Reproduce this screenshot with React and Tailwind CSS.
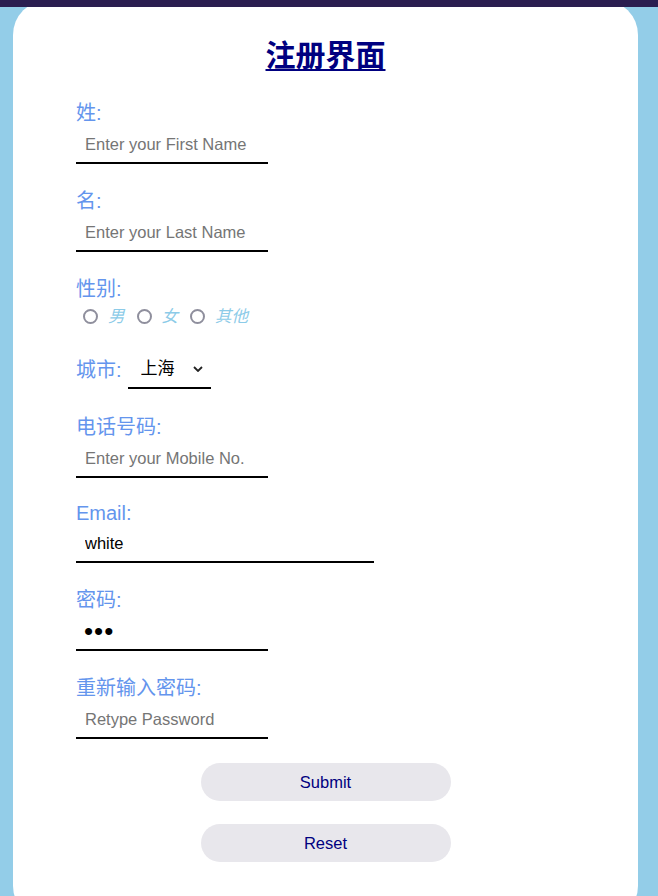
import React, { useState } from 'react';

const font = { fontFamily: '"Liberation Sans", "Noto Sans CJK SC", sans-serif' };

const labelCls = 'block text-[20px] leading-[26px] text-[#6495ed]';
const inputCls =
  'block h-[38px] border-b-2 border-black bg-transparent px-[9px] text-[16.5px] text-black outline-none placeholder:text-[#757575]';

function Field({ label, type = 'text', placeholder, value, onChange, wide, tight }) {
  return (
    <div className="mb-[24px]">
      <label className={tight ? 'block text-[20px] leading-[23px] text-[#6495ed]' : labelCls}>{label}</label>
      <input
        type={type}
        placeholder={placeholder}
        value={value}
        onChange={onChange}
        className={`${inputCls} ${wide ? 'w-[298px]' : 'w-[192px]'}`}
      />
    </div>
  );
}

export default function App() {
  const [form, setForm] = useState({
    first: '',
    last: '',
    gender: '',
    city: '上海',
    mobile: '',
    email: 'white',
    password: 'abc',
    retype: '',
  });

  const set = key => e => setForm({ ...form, [key]: e.target.value });

  return (
    <div className="min-h-screen bg-[#93cde8]" style={font}>
      {/* top strip */}
      <div className="fixed inset-x-0 top-0 z-10 h-[7px] bg-[#2b1e50]" />

      <div className="ml-[13px] mr-[20px] h-[921px] rounded-[35px] bg-white pt-[35px]">
        <h1
          className="text-center text-[30px] font-bold leading-[36px] text-[#000080] underline decoration-2 underline-offset-[3px]"
          style={{ fontFamily: '"Noto Sans CJK SC", sans-serif' }}
        >
          注册界面
        </h1>

        <form className="mt-[29px] px-[63px]" onSubmit={e => e.preventDefault()}>
          <Field label="姓:" placeholder="Enter your First Name" value={form.first} onChange={set('first')} />
          <Field label="名:" placeholder="Enter your Last Name" value={form.last} onChange={set('last')} />

          {/* gender */}
          <div className="mb-[21px]">
            <label className={labelCls}>性别:</label>
            <div className="flex h-[28px] items-center gap-[12px] pl-[7px]">
              {['男', '女', '其他'].map(g => (
                <label key={g} className="flex items-center gap-[10px]">
                  <input
                    type="radio"
                    name="gender"
                    value={g}
                    checked={form.gender === g}
                    onChange={set('gender')}
                    className="m-0 h-[15px] w-[15px] shrink-0 appearance-none rounded-full border-2 border-[#8f8f9d] bg-white checked:border-[4px] checked:border-[#0060df]"
                  />
                  <span className="text-[16.5px] italic leading-[20px] text-[#8ccbe8]">{g}</span>
                </label>
              ))}
            </div>
          </div>

          {/* city */}
          <div className="mb-[25px] flex h-[38px] items-center">
            <label className="text-[20px] leading-[26px] text-[#6495ed]">城市:</label>
            <div className="relative ml-[6px]">
              <select
                value={form.city}
                onChange={set('city')}
                className="block h-[38px] w-[83px] appearance-none border-b-2 border-black bg-transparent pl-[13px] text-[17px] text-black outline-none"
              >
                <option>上海</option>
                <option>北京</option>
                <option>广州</option>
                <option>深圳</option>
              </select>
              <svg
                className="pointer-events-none absolute right-[8px] top-[15px]"
                width="10"
                height="6"
                viewBox="0 0 10 6"
                fill="none"
                stroke="#222"
                strokeWidth="1.8"
              >
                <path d="M1 1l4 4 4-4" />
              </svg>
            </div>
          </div>

          <Field label="电话号码:" placeholder="Enter your Mobile No." value={form.mobile} onChange={set('mobile')} />
          <Field label="Email:" type="email" value={form.email} onChange={set('email')} wide tight />

          <div className="mb-[24px]">
            <label className={labelCls}>密码:</label>
            <input
              type="password"
              value={form.password}
              onChange={set('password')}
              className="block h-[38px] w-[192px] border-b-2 border-black bg-transparent px-[8px] text-[26px] tracking-[1px] text-black outline-none"
            />
          </div>

          <Field label="重新输入密码:" type="password" placeholder="Retype Password" value={form.retype} onChange={set('retype')} />

          <div className="flex flex-col items-center gap-[23px]">
            <button
              type="submit"
              className="h-[38px] w-[250px] rounded-full bg-[#e8e7ec] text-[16.5px] text-[#000080]"
            >
              Submit
            </button>
            <button
              type="reset"
              onClick={() => setForm({ ...form, first: '', last: '', gender: '', mobile: '', email: '', password: '', retype: '' })}
              className="h-[38px] w-[250px] rounded-full bg-[#e8e7ec] text-[16.5px] text-[#000080]"
            >
              Reset
            </button>
          </div>
        </form>
      </div>
    </div>
  );
}
